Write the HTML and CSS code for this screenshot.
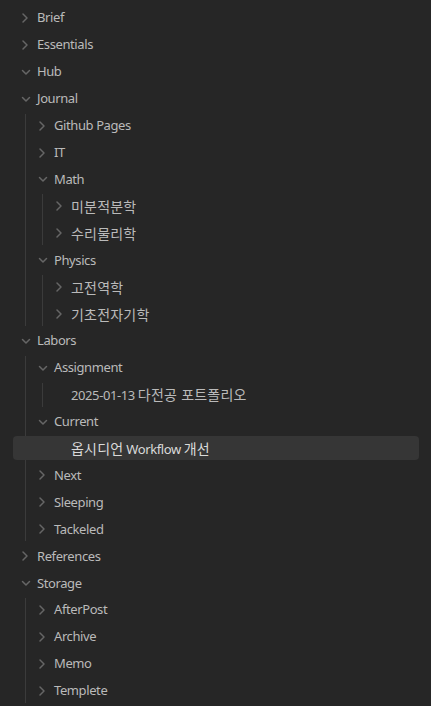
FILE: index.html
```html
<!DOCTYPE html>
<html lang="ko">
<head>
<meta charset="utf-8">
<title>Files</title>
<link rel="stylesheet" href="styles.css">
</head>
<body>
<div class="tree">
  <div class="item">
    <div class="row"><svg class="chev" viewBox="0 0 16 16"><path d="M2 4 L6 8 L2 12"/></svg><span class="label">Brief</span></div>
  </div>
  <div class="item">
    <div class="row"><svg class="chev" viewBox="0 0 16 16"><path d="M2 4 L6 8 L2 12"/></svg><span class="label">Essentials</span></div>
  </div>
  <div class="item">
    <div class="row"><svg class="chev" viewBox="0 0 16 16"><path d="M1.5 6.5 L5 10 L8.5 6.5"/></svg><span class="label">Hub</span></div>
  </div>
  <div class="item">
    <div class="row"><svg class="chev" viewBox="0 0 16 16"><path d="M1.5 6.5 L5 10 L8.5 6.5"/></svg><span class="label">Journal</span></div>
    <div class="children">
      <div class="item">
        <div class="row"><svg class="chev" viewBox="0 0 16 16"><path d="M2 4 L6 8 L2 12"/></svg><span class="label">Github Pages</span></div>
      </div>
      <div class="item">
        <div class="row"><svg class="chev" viewBox="0 0 16 16"><path d="M2 4 L6 8 L2 12"/></svg><span class="label">IT</span></div>
      </div>
      <div class="item">
        <div class="row"><svg class="chev" viewBox="0 0 16 16"><path d="M1.5 6.5 L5 10 L8.5 6.5"/></svg><span class="label">Math</span></div>
        <div class="children">
          <div class="item">
            <div class="row"><svg class="chev" viewBox="0 0 16 16"><path d="M2 4 L6 8 L2 12"/></svg><span class="label ko">미분적분학</span></div>
          </div>
          <div class="item">
            <div class="row"><svg class="chev" viewBox="0 0 16 16"><path d="M2 4 L6 8 L2 12"/></svg><span class="label ko">수리물리학</span></div>
          </div>
        </div>
      </div>
      <div class="item">
        <div class="row"><svg class="chev" viewBox="0 0 16 16"><path d="M1.5 6.5 L5 10 L8.5 6.5"/></svg><span class="label">Physics</span></div>
        <div class="children">
          <div class="item">
            <div class="row"><svg class="chev" viewBox="0 0 16 16"><path d="M2 4 L6 8 L2 12"/></svg><span class="label ko">고전역학</span></div>
          </div>
          <div class="item">
            <div class="row"><svg class="chev" viewBox="0 0 16 16"><path d="M2 4 L6 8 L2 12"/></svg><span class="label ko">기초전자기학</span></div>
          </div>
        </div>
      </div>
    </div>
  </div>
  <div class="item">
    <div class="row"><svg class="chev" viewBox="0 0 16 16"><path d="M1.5 6.5 L5 10 L8.5 6.5"/></svg><span class="label">Labors</span></div>
    <div class="children">
      <div class="item">
        <div class="row"><svg class="chev" viewBox="0 0 16 16"><path d="M1.5 6.5 L5 10 L8.5 6.5"/></svg><span class="label">Assignment</span></div>
        <div class="children">
          <div class="item">
            <div class="row file"><span class="label">2025-01-13 <span class="ko">다전공 포트폴리오</span></span></div>
          </div>
        </div>
      </div>
      <div class="item">
        <div class="row"><svg class="chev" viewBox="0 0 16 16"><path d="M1.5 6.5 L5 10 L8.5 6.5"/></svg><span class="label">Current</span></div>
        <div class="children">
          <div class="item">
            <div class="row file active"><span class="label"><span class="ko">옵시디언</span> Workflow <span class="ko">개선</span></span></div>
          </div>
        </div>
      </div>
      <div class="item">
        <div class="row"><svg class="chev" viewBox="0 0 16 16"><path d="M2 4 L6 8 L2 12"/></svg><span class="label">Next</span></div>
      </div>
      <div class="item">
        <div class="row"><svg class="chev" viewBox="0 0 16 16"><path d="M2 4 L6 8 L2 12"/></svg><span class="label">Sleeping</span></div>
      </div>
      <div class="item">
        <div class="row"><svg class="chev" viewBox="0 0 16 16"><path d="M2 4 L6 8 L2 12"/></svg><span class="label">Tackeled</span></div>
      </div>
    </div>
  </div>
  <div class="item">
    <div class="row"><svg class="chev" viewBox="0 0 16 16"><path d="M2 4 L6 8 L2 12"/></svg><span class="label">References</span></div>
  </div>
  <div class="item">
    <div class="row"><svg class="chev" viewBox="0 0 16 16"><path d="M1.5 6.5 L5 10 L8.5 6.5"/></svg><span class="label">Storage</span></div>
    <div class="children">
      <div class="item">
        <div class="row"><svg class="chev" viewBox="0 0 16 16"><path d="M2 4 L6 8 L2 12"/></svg><span class="label">AfterPost</span></div>
      </div>
      <div class="item">
        <div class="row"><svg class="chev" viewBox="0 0 16 16"><path d="M2 4 L6 8 L2 12"/></svg><span class="label">Archive</span></div>
      </div>
      <div class="item">
        <div class="row"><svg class="chev" viewBox="0 0 16 16"><path d="M2 4 L6 8 L2 12"/></svg><span class="label">Memo</span></div>
      </div>
      <div class="item">
        <div class="row"><svg class="chev" viewBox="0 0 16 16"><path d="M2 4 L6 8 L2 12"/></svg><span class="label">Templete</span></div>
      </div>
    </div>
  </div>
</div>
</body>
</html>
```

FILE: styles.css
```css
html, body {
  margin: 0;
  padding: 0;
  background: #262626;
  height: 100%;
  overflow: hidden;
}

body {
  font-family: "Noto Sans", "Noto Sans CJK KR", sans-serif;
  font-size: 13px;
  letter-spacing: -0.4px;
  color: #bababa;
}

.tree {
  padding: 3.08px 12px 0 13px;
}

.row {
  display: flex;
  align-items: center;
  height: 24px;
  margin-top: 2.92px;
  padding-left: 8px;
  border-radius: 4px;
  white-space: nowrap;
}

.chev {
  width: 16px;
  height: 16px;
  flex: none;
  fill: none;
  stroke: #666666;
  stroke-width: 1.5;
  stroke-linecap: round;
  stroke-linejoin: round;
}

.label {
  line-height: 1;
}

.ko {
  font-family: "Noto Sans CJK KR", sans-serif;
  font-size: 14px;
  letter-spacing: 0.2px;
}

.file {
  padding-left: 24px;
}

.children {
  margin-left: 12px;
  padding-left: 4px;
  border-left: 1px solid #3b3b3b;
}

.children .children .active {
  margin-left: -34px;
  padding-left: 58px;
}

.active {
  background: #363636;
  color: #dadada;
}
```
